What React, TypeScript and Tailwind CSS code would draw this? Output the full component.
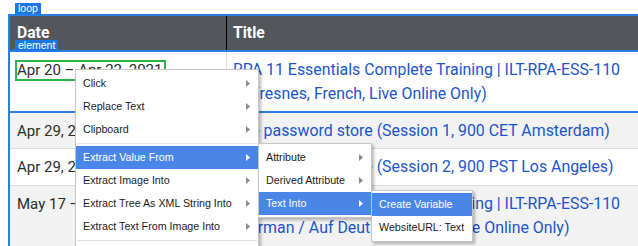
import React from "react";

type Row = { date: string; lines: string[]; gray: boolean; pb: string };

const rows: Row[] = [
  {
    date: "Apr 29, 2021",
    lines: ["The password store (Session 1, 900 CET Amsterdam)"],
    gray: true,
    pb: "pb-[5px]",
  },
  {
    date: "Apr 29, 2021",
    lines: ["The password store (Session 2, 900 PST Los Angeles)"],
    gray: false,
    pb: "pb-[6px]",
  },
  {
    date: "May 17 – May 19, 2021",
    lines: [
      "RPA 11 Essentials Complete Training | ILT-RPA-ESS-110",
      "(German / Auf Deutsch, DACH, Live Online Only)",
    ],
    gray: true,
    pb: "pb-[6px]",
  },
];

function Arrow({ light }: { light?: boolean }) {
  return (
    <svg width="4" height="7" viewBox="0 0 4 7" className="shrink-0">
      <polygon points="0,0 4,3.5 0,7" fill={light ? "#ffffff" : "#8a8a8a"} />
    </svg>
  );
}

function MenuItem({ label, active, arrow = true }: { label: string; active?: boolean; arrow?: boolean }) {
  return (
    <div
      className={`h-[23px] flex items-center justify-between pl-[7px] pr-[8px] ${
        active ? "bg-[#4a86e8] text-white" : "text-[#1a1a1a]"
      }`}
    >
      <span className="whitespace-nowrap">{label}</span>
      {arrow && <Arrow light={active} />}
    </div>
  );
}

const menuBox =
  "absolute bg-white border border-[#c6c6c6] shadow-[2px_2px_3px_rgba(0,0,0,0.28)] pt-[2px] pb-[2px] font-['Liberation_Sans',Arial,sans-serif] text-[10.7px]";

const tag =
  "h-[11px] px-[3px] bg-[#1a76e3] text-white text-[10.5px] leading-[11px] font-['Liberation_Sans',Arial,sans-serif]";

export default function App() {
  return (
    <div className="relative w-[638px] h-[246px] overflow-hidden bg-white font-['Roboto',sans-serif]">
      <div className="flex pl-[15px] pt-[3px]">
        <span className={tag}>loop</span>
      </div>

      <div className="ml-[8px] w-[640px] border-t-2 border-l-2 border-[#2a7fe6]">
        {/* header */}
        <div className="grid grid-cols-[217px_1fr] h-[34px] bg-[#53565a] text-white font-bold text-[15.7px]">
          <div className="flex items-center pl-[7px] border-r border-black">Date</div>
          <div className="flex items-center pl-[6px]">Title</div>
        </div>

        {/* selected element row */}
        <div className="grid grid-cols-[217px_1fr] border-y-2 border-[#2a7fe6] bg-white text-[15.9px] leading-[24px]">
          <div className="pl-[5px] pt-[6px] border-r border-[#e2e2e2]">
            <div className="inline-block border-2 border-[#2fb24c] pr-[2px] text-[15px] leading-[17px] text-[#2b2b2b] whitespace-nowrap">
              Apr 20 – Apr 22, 2021
            </div>
          </div>
          <div className="pl-[6px] pt-[6px] pb-[5px] text-[#1b55c9] whitespace-nowrap">
            <div>RPA 11 Essentials Complete Training | ILT-RPA-ESS-110</div>
            <div>(à Fresnes, French, Live Online Only)</div>
          </div>
        </div>

        {rows.map((r, i) => (
          <div
            key={i}
            className={`grid grid-cols-[217px_1fr] border-b border-[#dcdcdc] text-[15.9px] leading-[24px] ${
              r.gray ? "bg-[#f2f2f2]" : "bg-white"
            }`}
          >
            <div className={`pl-[7px] pt-[6px] ${r.pb} border-r border-[#e2e2e2] text-[15px] text-[#2b2b2b] whitespace-nowrap`}>
              {r.date}
            </div>
            <div className={`pl-[6px] pt-[6px] ${r.pb} text-[#1b55c9] whitespace-nowrap`}>
              {r.lines.map((l) => (
                <div key={l}>{l}</div>
              ))}
            </div>
          </div>
        ))}
      </div>

      <span className={`absolute left-[15px] top-[40px] ${tag}`}>element</span>

      {/* context menu */}
      <div className={`${menuBox} left-[75px] top-[69px] w-[184px] h-[200px]`}>
        <MenuItem label="Click" />
        <MenuItem label="Replace Text" />
        <MenuItem label="Clipboard" />
        <div className="my-[2px] mx-[1px] h-px bg-[#e6e6e6]" />
        <MenuItem label="Extract Value From" active />
        <MenuItem label="Extract Image Into" />
        <MenuItem label="Extract Tree As XML String Into" />
        <MenuItem label="Extract Text From Image Into" />
        <div className="my-[2px] mx-[1px] h-px bg-[#dedede]" />
      </div>

      <div className={`${menuBox} left-[258px] top-[143px] w-[114px]`}>
        <MenuItem label="Attribute" />
        <MenuItem label="Derived Attribute" />
        <MenuItem label="Text Into" active />
      </div>

      <div className={`${menuBox} left-[371px] top-[190px] w-[102px]`}>
        <MenuItem label="Create Variable" active arrow={false} />
        <MenuItem label="WebsiteURL: Text" arrow={false} />
      </div>
    </div>
  );
}
